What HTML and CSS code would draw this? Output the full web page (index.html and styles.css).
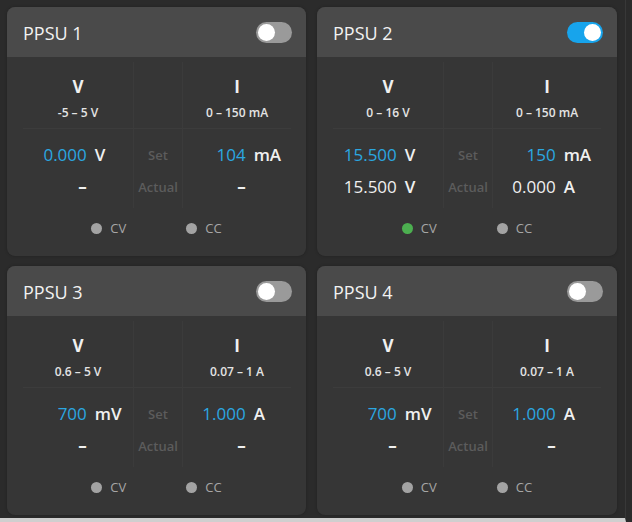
FILE: index.html
```html
<!DOCTYPE html>
<html lang="en">
<head>
    <meta charset="UTF-8">
    <meta name="viewport" content="width=device-width, initial-scale=1.0">
    <title>PPSU Panel</title>
    <link rel="stylesheet" href="styles.css">
</head>
<body>
    <div class="screen">
        <div class="grid">
            <!-- PPSU 1 -->
            <section class="card">
                <header class="card-head">
                    <span class="card-title">PPSU 1</span>
                    <span class="toggle"></span>
                </header>
                <div class="readings">
                    <div class="cell top"><span class="qty">V</span><span class="range">-5 – 5 V</span></div>
                    <div class="cell top mid"></div>
                    <div class="cell top"><span class="qty">I</span><span class="range">0 – 150 mA</span></div>

                    <div class="cell pair first"><span class="num set">0.000</span><span class="unit">V</span></div>
                    <div class="cell mid label first">Set</div>
                    <div class="cell pair first"><span class="num set">104</span><span class="unit">mA</span></div>

                    <div class="cell pair"><span class="num dash">–</span><span class="unit"></span></div>
                    <div class="cell mid label">Actual</div>
                    <div class="cell pair"><span class="num dash">–</span><span class="unit"></span></div>

                    <div class="cell end"></div>
                    <div class="cell end mid"></div>
                    <div class="cell end"></div>
                </div>
                <div class="modes">
                    <span class="mode"><i class="dot"></i>CV</span>
                    <span class="mode"><i class="dot"></i>CC</span>
                </div>
            </section>

            <!-- PPSU 2 -->
            <section class="card">
                <header class="card-head">
                    <span class="card-title">PPSU 2</span>
                    <span class="toggle on"></span>
                </header>
                <div class="readings">
                    <div class="cell top"><span class="qty">V</span><span class="range">0 – 16 V</span></div>
                    <div class="cell top mid"></div>
                    <div class="cell top"><span class="qty">I</span><span class="range">0 – 150 mA</span></div>

                    <div class="cell pair first"><span class="num set">15.500</span><span class="unit">V</span></div>
                    <div class="cell mid label first">Set</div>
                    <div class="cell pair first"><span class="num set">150</span><span class="unit">mA</span></div>

                    <div class="cell pair"><span class="num">15.500</span><span class="unit">V</span></div>
                    <div class="cell mid label">Actual</div>
                    <div class="cell pair"><span class="num">0.000</span><span class="unit">A</span></div>

                    <div class="cell end"></div>
                    <div class="cell end mid"></div>
                    <div class="cell end"></div>
                </div>
                <div class="modes">
                    <span class="mode"><i class="dot active"></i>CV</span>
                    <span class="mode"><i class="dot"></i>CC</span>
                </div>
            </section>

            <!-- PPSU 3 -->
            <section class="card">
                <header class="card-head">
                    <span class="card-title">PPSU 3</span>
                    <span class="toggle"></span>
                </header>
                <div class="readings">
                    <div class="cell top"><span class="qty">V</span><span class="range">0.6 – 5 V</span></div>
                    <div class="cell top mid"></div>
                    <div class="cell top"><span class="qty">I</span><span class="range">0.07 – 1 A</span></div>

                    <div class="cell pair first"><span class="num set">700</span><span class="unit">mV</span></div>
                    <div class="cell mid label first">Set</div>
                    <div class="cell pair first"><span class="num set">1.000</span><span class="unit">A</span></div>

                    <div class="cell pair"><span class="num dash">–</span><span class="unit"></span></div>
                    <div class="cell mid label">Actual</div>
                    <div class="cell pair"><span class="num dash">–</span><span class="unit"></span></div>

                    <div class="cell end"></div>
                    <div class="cell end mid"></div>
                    <div class="cell end"></div>
                </div>
                <div class="modes">
                    <span class="mode"><i class="dot"></i>CV</span>
                    <span class="mode"><i class="dot"></i>CC</span>
                </div>
            </section>

            <!-- PPSU 4 -->
            <section class="card">
                <header class="card-head">
                    <span class="card-title">PPSU 4</span>
                    <span class="toggle"></span>
                </header>
                <div class="readings">
                    <div class="cell top"><span class="qty">V</span><span class="range">0.6 – 5 V</span></div>
                    <div class="cell top mid"></div>
                    <div class="cell top"><span class="qty">I</span><span class="range">0.07 – 1 A</span></div>

                    <div class="cell pair first"><span class="num set">700</span><span class="unit">mV</span></div>
                    <div class="cell mid label first">Set</div>
                    <div class="cell pair first"><span class="num set">1.000</span><span class="unit">A</span></div>

                    <div class="cell pair"><span class="num dash">–</span><span class="unit"></span></div>
                    <div class="cell mid label">Actual</div>
                    <div class="cell pair"><span class="num dash">–</span><span class="unit"></span></div>

                    <div class="cell end"></div>
                    <div class="cell end mid"></div>
                    <div class="cell end"></div>
                </div>
                <div class="modes">
                    <span class="mode"><i class="dot"></i>CV</span>
                    <span class="mode"><i class="dot"></i>CC</span>
                </div>
            </section>
        </div>
    </div>
</body>
</html>
```

FILE: styles.css
```css
html, body {
    margin: 0;
    padding: 0;
}
body {
    font-family: "Open Sans", "Noto Sans", sans-serif;
    background-color: #2b2b2b;
    color: #f0f0f0;
    width: 632px;
    height: 522px;
    overflow: hidden;
}
.screen {
    width: 625px;
    height: 518px;
    border-right: 1px solid #383838;
    border-bottom: 4px solid #cfcfcf;
}
.grid {
    display: grid;
    grid-template-columns: 299px 300px;
    grid-template-rows: 249px 249px;
    column-gap: 11px;
    row-gap: 10px;
    padding: 7px;
}
.card {
    background: #363636;
    border-radius: 8px;
    overflow: hidden;
    display: flex;
    flex-direction: column;
    box-shadow: 0 0 3px rgba(0,0,0,0.25);
}
.card-head {
    height: 50px;
    background: #4a4a4a;
    display: flex;
    align-items: center;
    justify-content: space-between;
    padding: 0 14px 0 16px;
}
.card-title {
    font-size: 18px;
    color: #f2f2f2;
    padding-top: 1px;
}
.toggle {
    position: relative;
    width: 36px;
    height: 21px;
    border-radius: 11px;
    background: #9a9a9a;
}
.toggle::after {
    content: "";
    position: absolute;
    top: 2px;
    left: 2px;
    width: 17px;
    height: 17px;
    border-radius: 50%;
    background: #ffffff;
}
.toggle.on {
    background: #17a4ec;
}
.toggle.on::after {
    left: 17px;
}
.readings {
    display: grid;
    grid-template-columns: 110px 50px 108px;
    padding: 0 15px 0 16px;
    margin-top: 5px;
}
.cell {
    height: 32px;
    line-height: 32px;
}
.cell.top {
    height: 67px;
    line-height: normal;
    border-bottom: 1px solid #3c3c3c;
    display: flex;
    flex-direction: column;
    align-items: center;
    padding-top: 15px;
    box-sizing: border-box;
}
.cell.first {
    height: 42px;
    padding-top: 10px;
    box-sizing: border-box;
}
.cell.end {
    height: 5px;
}
.mid {
    border-left: 1px solid #3b3b3b;
    border-right: 1px solid #3b3b3b;
}
.qty {
    font-size: 17px;
    font-weight: 700;
    line-height: 20px;
}
.range {
    margin-top: 7px;
    font-size: 12px;
    font-weight: 600;
    line-height: 18px;
    color: #e4e4e4;
}
.pair {
    display: grid;
    grid-template-columns: 58% 1fr;
    column-gap: 8px;
    font-size: 17px;
}
.num {
    text-align: right;
    color: #f0f0f0;
}
.num.set {
    color: #2ba7e0;
}
.num.dash {
    font-weight: 700;
}
.unit {
    font-weight: 600;
    color: #f0f0f0;
}
.label {
    text-align: center;
    font-size: 13px;
    font-weight: 600;
    color: #5c5c5c;
}
.modes {
    display: flex;
    justify-content: center;
    gap: 60px;
    margin-top: 10px;
    height: 20px;
    align-items: center;
}
.mode {
    display: flex;
    align-items: center;
    gap: 8px;
    font-size: 13px;
    color: #a6a6a6;
}
.dot {
    width: 11px;
    height: 11px;
    border-radius: 50%;
    background: #a3a3a3;
}
.dot.active {
    background: #4caf50;
}
```
